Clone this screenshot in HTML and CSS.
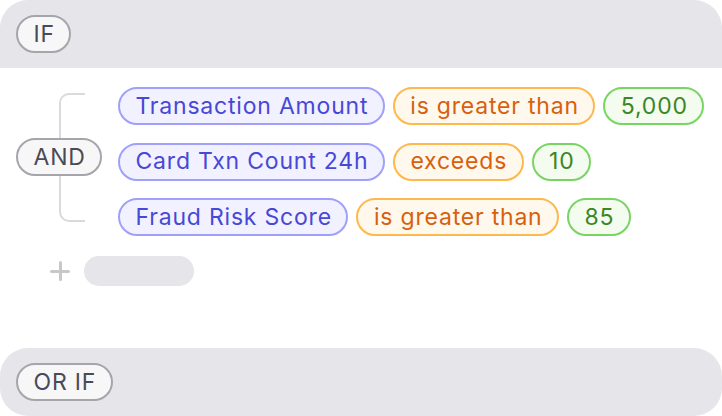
FILE: index.html
```html
<!DOCTYPE html>
<html lang="en">
<head>
<meta charset="utf-8">
<title>Rule builder</title>
<link rel="stylesheet" href="styles.css">
</head>
<body>
<section class="rule">
  <header class="band band-top">
    <span class="pill pill-neutral">IF</span>
  </header>
  <div class="rule-body">
    <div class="group">
      <div class="connector">
        <span class="pill pill-neutral">AND</span>
      </div>
      <div class="conditions">
        <div class="condition">
          <span class="pill pill-field">Transaction Amount</span>
          <span class="pill pill-op">is greater than</span>
          <span class="pill pill-val">5,000</span>
        </div>
        <div class="condition">
          <span class="pill pill-field">Card Txn Count 24h</span>
          <span class="pill pill-op">exceeds</span>
          <span class="pill pill-val">10</span>
        </div>
        <div class="condition">
          <span class="pill pill-field">Fraud Risk Score</span>
          <span class="pill pill-op">is greater than</span>
          <span class="pill pill-val">85</span>
        </div>
      </div>
    </div>
    <div class="add-row">
      <span class="plus" aria-label="Add condition"></span>
      <span class="placeholder"></span>
    </div>
  </div>
</section>
<section class="band band-full">
  <span class="pill pill-neutral">OR IF</span>
</section>
</body>
</html>
```
FILE: styles.css
```css
* { box-sizing: border-box; }
html, body { margin: 0; padding: 0; background: #ffffff; }
body {
  width: 722px;
  height: 416px;
  overflow: hidden;
  font-family: Inter, "Noto Sans", "Liberation Sans", sans-serif;
  font-size: 23px;
  letter-spacing: 0.8px;
}
.band {
  display: flex;
  align-items: center;
  height: 68px;
  padding: 0 16px;
  background: #e5e5ea;
}
.band-top { border-radius: 28px 28px 0 0; }
.band-full { border-radius: 28px; margin-top: 62px; }

.pill {
  display: inline-flex;
  align-items: center;
  height: 38px;
  padding: 0 14.5px 0 15.5px;
  border: 2px solid;
  border-radius: 19px;
  white-space: nowrap;
  line-height: 1;
}
.pill-neutral {
  background: #f7f7f8;
  border-color: #a5a5ab;
  color: #4a4a56;
}
.pill-field {
  background: #f1f1ff;
  border-color: #a0a0fb;
  color: #4848d6;
}
.pill-op {
  background: #fff8ec;
  border-color: #fdb84e;
  color: #d8600c;
}
.pill-val {
  background: #f4fbef;
  border-color: #78d563;
  color: #3a8725;
}

.rule-body { padding-top: 19px; }
.group {
  display: flex;
  padding-left: 16px;
}
.connector {
  position: relative;
  width: 102px;
  padding-top: 51px;
}
.connector::before {
  content: "";
  position: absolute;
  left: 43px;
  top: 6px;
  width: 24px;
  height: 125px;
  border: 2px solid #dadade;
  border-right: none;
  border-radius: 10px 0 0 10px;
}
.connector .pill { position: relative; }

.conditions {
  display: flex;
  flex-direction: column;
  gap: 17.5px;
}
.condition {
  display: flex;
  gap: 8px;
}

.add-row {
  display: flex;
  align-items: center;
  gap: 14px;
  margin-top: 20px;
  padding-left: 50px;
}
.plus {
  position: relative;
  width: 20px;
  height: 20px;
}
.plus::before, .plus::after {
  content: "";
  position: absolute;
  background: #c7c7cc;
  border-radius: 2px;
}
.plus::before { left: 0; top: 8.5px; width: 20px; height: 3px; }
.plus::after { top: 0; left: 8.5px; width: 3px; height: 20px; }
.placeholder {
  width: 110px;
  height: 30px;
  border-radius: 15px;
  background: #e5e5ea;
}
```
